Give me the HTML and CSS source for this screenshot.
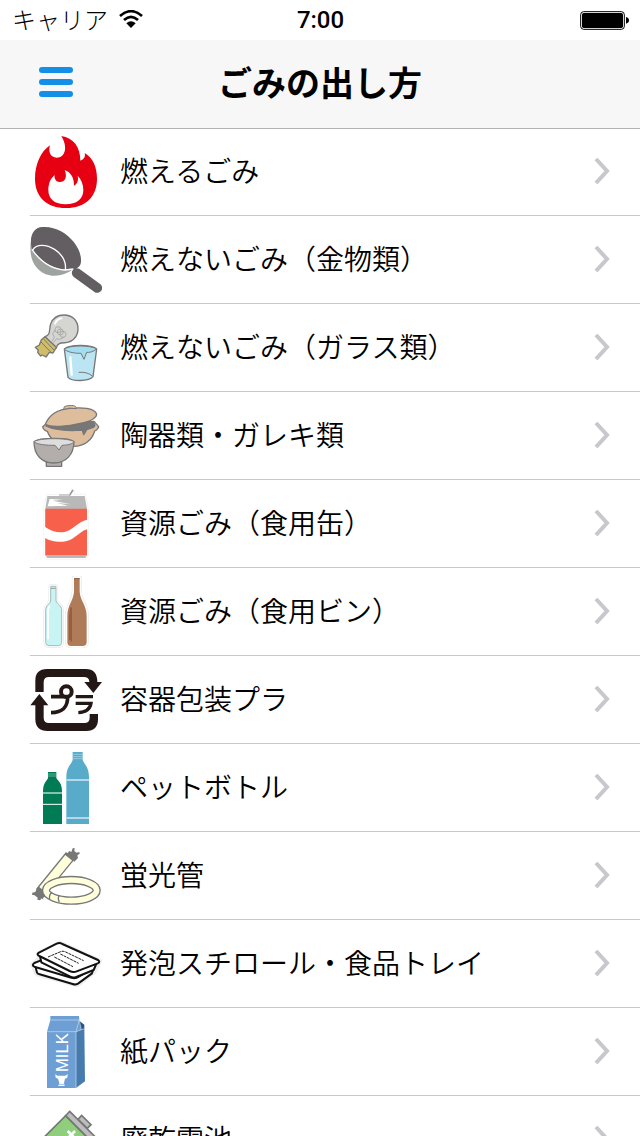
FILE: index.html
```html
<!DOCTYPE html>
<html lang="ja">
<head>
  <meta charset="UTF-8">
  <meta name="viewport" content="width=device-width, initial-scale=1">
  <title>ごみの出し方</title>
  <link rel="stylesheet" href="styles.css">
</head>
<body>
  <div class="status-bar">
    <div class="carrier">
      <span>キャリア</span>
      <svg class="wifi" viewBox="0 0 72 54" aria-hidden="true">
        <path d="M3 18Q36-11 69 18M15 30Q36 11 57 30" fill="none" stroke="#000" stroke-width="8"/>
        <path d="M22 40Q36 28 50 40L36 54Z"/>
      </svg>
    </div>
    <div class="clock">7:00</div>
    <svg class="battery" viewBox="0 0 147 57" aria-hidden="true">
      <rect x="2" y="2" width="131" height="53" rx="9" fill="none" stroke="#000" stroke-width="3"/>
      <rect x="6" y="6" width="123" height="45" rx="5"/>
      <path d="M138 18Q147 20 147 28T138 38Z"/>
    </svg>
  </div>

  <header class="nav-bar">
    <button class="menu-button" type="button" aria-label="メニュー">
      <span></span><span></span><span></span>
    </button>
    <h1>ごみの出し方</h1>
  </header>

  <ul class="list">
    <li>
      <a href="#" class="row">
        <svg class="icon" viewBox="30 18 216 216" aria-hidden="true">
          <path fill="#e60012" d="M124 18C160 24 181 50 181 92C192 88 197 80 194 69C218 83 231 110 231 146C231 200 196 234 138 234C80 234 45 200 45 146C45 103 62 65 90 46C84 66 92 83 110 83C135 83 145 53 124 18Z"/>
          <path fill="#fff" d="M134 120C151 126 163 142 162 167C172 161 176 151 173 137C184 148 190 163 190 180C190 207 170 223 137 223C104 223 85 207 85 180C85 162 91 146 104 135C102 146 108 156 119 156C135 156 143 142 134 120Z"/>
        </svg>
        <span class="label">燃えるごみ</span>
        <svg class="chevron" viewBox="0 0 16 26" aria-hidden="true"><path d="M2 1L13 13L2 25"/></svg>
      </a>
    </li>
    <li>
      <a href="#" class="row">
        <svg class="icon" viewBox="30 18 216 216" aria-hidden="true">
          <path fill="#9fa3a0" d="M32 72C28 116 38 145 68 164C98 180 130 175 160 154L100 90Z"/>
          <path fill="#625e61" d="M36 93C28 66 34 34 60 28C97 21 139 42 162 73C182 99 189 130 178 145C171 154 155 158 136 155C100 153 58 128 36 93Z"/>
          <path fill="none" stroke="#fff" stroke-width="4" d="M36 94C62 132 98 154 136 156L160 153M38 96C49 77 79 78 105 95C128 111 139 133 136 156"/>
          <path stroke="#625e61" stroke-width="29" stroke-linecap="round" d="M170 165L232 210"/>
        </svg>
        <span class="label">燃えないごみ（金物類）</span>
        <svg class="chevron" viewBox="0 0 16 26" aria-hidden="true"><path d="M2 1L13 13L2 25"/></svg>
      </a>
    </li>
    <li>
      <a href="#" class="row">
        <svg class="icon" viewBox="30 18 216 216" aria-hidden="true">
          <g stroke="#777" stroke-width="4" stroke-linejoin="round">
            <path fill="#d5d5d2" d="M75 92C94 86 86 70 92 54C99 35 113 27 132 27C157 27 174 44 174 68C174 91 158 108 138 110C126 111 112 109 109 126Z"/>
            <path fill="#d0bd68" d="M75 92L109 124L99 141L88 139L78 153L67 147L62 150L53 139L55 133L46 124L58 117L64 101Z"/>
            <path fill="none" stroke-width="3" d="M70 98L102 132M62 107L94 140"/>
            <g fill="none" stroke="#999" stroke-width="2">
              <circle cx="114" cy="71" r="9"/><circle cx="121" cy="78" r="9"/><circle cx="129" cy="85" r="9"/>
              <path d="M105 72L98 83L103 94L96 106M131 94L120 100L110 98L100 110"/>
            </g>
            <path fill="#bce5f4" d="M133 129L144 214C155 227 207 227 219 212L230 129C213 115 149 115 133 129Z"/>
            <path fill="#a5ddf0" stroke-width="3" d="M133 129C149 117 213 117 230 129C219 138 207 140 200 139L192 160L183 142C161 142 141 138 133 129Z"/>
            <path fill="none" stroke-width="3" d="M176 199Q202 197 217 210"/>
          </g>
          <path stroke="#fff" stroke-width="7" stroke-linecap="round" d="M151 154L155 206"/>
          <path fill="none" stroke="#fff" stroke-width="6" stroke-linecap="round" d="M105 53Q111 39 124 37"/>
        </svg>
        <span class="label">燃えないごみ（ガラス類）</span>
        <svg class="chevron" viewBox="0 0 16 26" aria-hidden="true"><path d="M2 1L13 13L2 25"/></svg>
      </a>
    </li>
    <li>
      <a href="#" class="row">
        <svg class="icon" viewBox="30 18 216 216" aria-hidden="true">
          <g stroke="#777" stroke-width="4" stroke-linejoin="round">
            <path fill="#debd9d" d="M78 90L68 98Q70 109 82 112C91 139 119 157 161 157C194 157 216 138 224 111Q234 107 236 98L222 82Z"/>
            <path fill="#777" d="M78 96C100 86 192 77 220 86Q229 94 220 100L200 107L191 122L187 108C143 112 99 107 78 96Z"/>
            <path fill="#debd9d" d="M76 91C86 66 110 46 151 43C186 39 221 43 229 58C234 71 211 82 181 88C144 97 93 102 76 91Z"/>
            <path fill="#debd9d" stroke-width="3" d="M131 46L133 38C147 32 166 34 168 39L169 44Q148 40 131 46Z"/>
            <path fill="#b3aeac" d="M79 203H125V217H79Z"/>
            <path fill="#b3aeac" d="M42 143C42 180 63 207 101 207C139 207 161 181 162 143C149 130 58 130 42 143Z"/>
            <path fill="#ddd" stroke-width="3" d="M42 143C57 131 147 131 162 143C158 150 145 153 126 154L117 168L105 154C80 154 51 152 42 143Z"/>
          </g>
        </svg>
        <span class="label">陶器類・ガレキ類</span>
        <svg class="chevron" viewBox="0 0 16 26" aria-hidden="true"><path d="M2 1L13 13L2 25"/></svg>
      </a>
    </li>
    <li>
      <a href="#" class="row">
        <svg class="icon" viewBox="30 24 216 216" aria-hidden="true">
          <path fill="#fff" stroke="#eee" stroke-width="2" d="M80 43H145L155 26L165 31L160 43H196L205 85V227L196 238H80L71 227V85Z"/>
          <path fill="#b9b9b9" d="M82 48H194L201 86V226L196 234H82L76 226V86Z"/>
          <path stroke="#999" stroke-width="5" d="M148 47L159 30"/>
          <path stroke="#bbb" stroke-width="4" d="M117 45H150"/>
          <path fill="#f7614c" d="M76 86H201V225H76Z"/>
          <path fill="#fff" d="M75 141C101 158 128 162 150 149C169 137 181 124 201 119V148C183 154 174 166 157 176C130 190 99 188 75 174Z"/>
          <path fill="#fff" d="M89 57L127 59L98 62L153 73L110 69L145 77L83 79Z"/>
        </svg>
        <span class="label">資源ごみ（食用缶）</span>
        <svg class="chevron" viewBox="0 0 16 26" aria-hidden="true"><path d="M2 1L13 13L2 25"/></svg>
      </a>
    </li>
    <li>
      <a href="#" class="row">
        <svg class="icon" viewBox="30 18 216 216" aria-hidden="true">
          <g stroke-linejoin="round">
            <path fill="#fff" stroke="#e4e4e4" stroke-width="13" d="M92 49H108V93C111 103 125 105 125 120V217Q125 227 115 227H87Q77 227 77 217V120C77 105 89 103 92 93Z"/>
            <path fill="#fff" stroke="#e4e4e4" stroke-width="13" d="M162 24H179V66C181 92 200 107 200 137V216Q200 228 188 228H153Q142 228 142 216V137C142 107 160 92 162 66Z"/>
            <path fill="#c8f5f3" stroke="#fff" stroke-width="10" paint-order="stroke" d="M92 49H108V93C111 103 125 105 125 120V217Q125 227 115 227H87Q77 227 77 217V120C77 105 89 103 92 93Z"/>
            <path fill="#b07b58" stroke="#fff" stroke-width="10" paint-order="stroke" d="M162 24H179V66C181 92 200 107 200 137V216Q200 228 188 228H153Q142 228 142 216V137C142 107 160 92 162 66Z"/>
            <path fill="none" stroke="#a9b9b9" stroke-width="3" d="M92 49H108V93C111 103 125 105 125 120V217Q125 227 115 227H87Q77 227 77 217V120C77 105 89 103 92 93Z"/>
          </g>
          <path stroke="#8e9c9c" stroke-width="3" d="M93 55H107"/>
          <path stroke="#945f40" stroke-width="3" d="M162 26H179"/>
          <path fill="#94603f" d="M151 112H156V217L147 208V137Z"/>
          <path fill="none" stroke="#fff" stroke-width="6" d="M84 208V122Q85 112 90 108"/>
        </svg>
        <span class="label">資源ごみ（食用ビン）</span>
        <svg class="chevron" viewBox="0 0 16 26" aria-hidden="true"><path d="M2 1L13 13L2 25"/></svg>
      </a>
    </li>
    <li>
      <a href="#" class="row">
        <svg class="icon" viewBox="30 18 216 216" aria-hidden="true">
          <g fill="#231815">
            <path d="M46 102V68Q46 33 81 33H197Q232 33 232 72H246L220 105L193 72H208Q208 57 191 57H87Q71 57 71 73V102Z"/>
            <path d="M234 168V184Q234 219 199 219H83Q46 219 46 183V142H31L58 108L85 142H71V179Q71 195 87 195H193Q209 195 209 179V168Z"/>
          </g>
          <g fill="none" stroke="#231815">
            <circle cx="139" cy="101" r="16" stroke-width="12"/>
            <path stroke-width="11" d="M93 116H143C143 148 129 163 93 164"/>
            <path stroke-width="10" d="M167 116H219M167 136H213Q209 162 175 164"/>
          </g>
        </svg>
        <span class="label">容器包装プラ</span>
        <svg class="chevron" viewBox="0 0 16 26" aria-hidden="true"><path d="M2 1L13 13L2 25"/></svg>
      </a>
    </li>
    <li>
      <a href="#" class="row">
        <svg class="icon" viewBox="30 18 216 216" aria-hidden="true">
          <path fill="#007b55" d="M84 78H109V96C115 106 126 110 126 137V234H69V137C69 110 80 106 84 96Z"/>
          <path fill="#58acca" d="M158 18H188V42C192 55 207 61 207 94V234H139V94C139 61 155 55 158 42Z"/>
          <path stroke="#98cbb9" stroke-width="2" d="M83 84H110M83 90H110"/>
          <path stroke="#b2dae7" stroke-width="2" d="M157 25H189M157 32H189M157 38H189"/>
          <path stroke="#86c1ac" stroke-width="6" d="M69 141H126"/>
          <path stroke="#fff" stroke-width="3" d="M69 175H126"/>
          <path stroke="#b5d9e7" stroke-width="6" d="M139 102H207M139 216H207"/>
        </svg>
        <span class="label">ペットボトル</span>
        <svg class="chevron" viewBox="0 0 16 26" aria-hidden="true"><path d="M2 1L13 13L2 25"/></svg>
      </a>
    </li>
    <li>
      <a href="#" class="row">
        <svg class="icon" viewBox="30 282 216 216" aria-hidden="true">
          <path stroke="#777" stroke-width="34" d="M62 438L151 329"/>
          <path stroke="#ffffdc" stroke-width="26" d="M68 431L146 335"/>
          <path fill="#777" d="M138 326L148 315L154 318L158 307L164 306L163 315L170 320L178 318L179 323L172 328L174 336L163 347ZM51 425L77 450L69 456L70 461L65 457L60 463L52 461L53 455L44 448L36 446L37 440L46 438Z"/>
          <ellipse cx="154" cy="433" rx="76" ry="31" fill="none" stroke="#777" stroke-width="25"/>
          <ellipse cx="154" cy="433" rx="76" ry="31" fill="none" stroke="#ffffdc" stroke-width="17"/>
          <path fill="none" stroke="#777" stroke-width="4" d="M96 439Q86 446 89 460M118 447Q112 458 118 468"/>
        </svg>
        <span class="label">蛍光管</span>
        <svg class="chevron" viewBox="0 0 16 26" aria-hidden="true"><path d="M2 1L13 13L2 25"/></svg>
      </a>
    </li>
    <li>
      <a href="#" class="row">
        <svg class="icon" viewBox="30 24 216 216" aria-hidden="true">
          <path fill="#fff" stroke="#eee" stroke-width="14" stroke-linejoin="round" d="M37 133L60 114L54 101L119 69L239 123L221 157L172 195L49 161Z"/>
          <g fill="#fff" stroke="#111" stroke-width="6" stroke-linejoin="round">
            <path d="M47 142L51 158Q53 162 59 163L158 192Q166 196 174 191L216 160L221 143L130 116Z"/>
            <path d="M43 129Q34 136 43 140L154 173Q166 177 175 171L220 143L61 122Z"/>
            <path d="M60 108L64 127L151 170Q159 175 169 171L221 150L228 134Z"/>
            <path d="M57 98Q48 104 58 108L149 153Q160 158 170 154L233 130Q242 126 234 120L127 72Q119 67 110 71Z"/>
          </g>
          <g fill="none" stroke="#222" stroke-width="3" stroke-dasharray="9 2">
            <path d="M84 111L122 95Q130 92 137 96L191 122M121 102L176 130M103 111L159 140"/>
          </g>
        </svg>
        <span class="label">発泡スチロール・食品トレイ</span>
        <svg class="chevron" viewBox="0 0 16 26" aria-hidden="true"><path d="M2 1L13 13L2 25"/></svg>
      </a>
    </li>
    <li>
      <a href="#" class="row">
        <svg class="icon" viewBox="30 24 216 216" aria-hidden="true">
          <path fill="#6e9fd4" d="M91 24H177L178 36L168 71V240H81V71L91 36Z"/>
          <path fill="#487bad" d="M168 71L193 62L195 220L168 240Z"/>
          <path fill="#285787" d="M178 38L193 50V63L168 71Z"/>
          <path fill="#6e9fd4" d="M178 42L168 71L184 65Z"/>
          <path fill="none" stroke="#c8ddf2" stroke-width="2" d="M91 36H178L168 71H81M168 71L193 62M168 71V240M178 38L184 65"/>
          <text class="milk" transform="translate(143 192) rotate(-90)">MILK</text>
          <path fill="#fff" d="M106 198L112 203H136L143 198L142 209L135 212L132 225L134 234H115L118 225L114 212L107 209Z"/>
          <path stroke="#6e9fd4" stroke-width="2" d="M117 229H133"/>
        </svg>
        <span class="label">紙パック</span>
        <svg class="chevron" viewBox="0 0 16 26" aria-hidden="true"><path d="M2 1L13 13L2 25"/></svg>
      </a>
    </li>
    <li>
      <a href="#" class="row">
        <svg class="icon" viewBox="30 288 216 216" aria-hidden="true">
          <g stroke="#777" stroke-width="5">
            <path fill="#bdbdbd" d="M174 334L185 322L213 350L202 361Z"/>
            <path fill="#8fce7c" d="M137 323L215 401L124 492L46 414Z"/>
            <path fill="#bdbdbd" d="M149 310L228 389L215 401L137 323Z"/>
          </g>
          <path stroke="#fff" stroke-width="8" d="M143 369L165 391M165 369L143 391"/>
        </svg>
        <span class="label">廃乾電池</span>
        <svg class="chevron" viewBox="0 0 16 26" aria-hidden="true"><path d="M2 1L13 13L2 25"/></svg>
      </a>
    </li>
  </ul>
</body>
</html>
```

FILE: styles.css
```css
* {
  box-sizing: border-box;
}

body {
  margin: 0;
  height: 100vh;
  display: flex;
  flex-direction: column;
  overflow: hidden;
  background: #fff;
  color: #000;
  font-family: "Noto Sans CJK JP", sans-serif;
}

/* status bar */
.status-bar {
  display: grid;
  grid-template-columns: 1fr auto 1fr;
  align-items: center;
  flex: none;
  height: 40px;
  padding: 0 11px 0 12px;
}

.carrier {
  display: flex;
  align-items: center;
  gap: 11px;
  padding-bottom: 2px;
  font-size: 24px;
  font-weight: 300;
  line-height: 38px;
}

.wifi {
  width: 24px;
  height: 18px;
}

.clock {
  font-family: Roboto, sans-serif;
  font-size: 24px;
  font-weight: 500;
  line-height: 40px;
}

.battery {
  justify-self: end;
  width: 49px;
  height: 19px;
}

/* navigation bar */
.nav-bar {
  display: grid;
  grid-template-columns: 1fr auto 1fr;
  align-items: center;
  flex: none;
  height: 89px;
  padding: 0 30px 4px;
  background: #f7f7f7;
  border-bottom: 1px solid #b2b2b2;
}

.nav-bar h1 {
  margin: 0;
  font-size: 34px;
  font-weight: 700;
  line-height: 48px;
}

.menu-button {
  display: flex;
  flex-direction: column;
  justify-self: start;
  gap: 6px;
  padding: 9px;
  border: none;
  background: none;
  cursor: pointer;
}

.menu-button span {
  width: 34px;
  height: 6px;
  border-radius: 3px;
  background: #148fe7;
}

/* category list */
.list {
  flex: 1;
  min-height: 0;
  margin: 0;
  padding: 0 0 0 30px;
  list-style: none;
  overflow-y: auto;
  scrollbar-width: none;
}

.list li {
  height: 88px;
  border-bottom: 1px solid #c8c7cc;
}

.list li:first-child {
  height: 87px;
}

.row {
  display: flex;
  align-items: center;
  height: 100%;
  padding-right: 30px;
  color: #000;
  text-decoration: none;
}

.icon {
  flex: none;
  width: 72px;
  height: 72px;
  margin-right: 18px;
}

.label {
  flex: 1;
  padding-bottom: 4px;
  font-size: 28px;
  font-weight: 350;
  line-height: 40px;
}

.chevron {
  width: 16px;
  height: 26px;
  margin-bottom: 2px;
  fill: none;
  stroke: #c7c7cc;
  stroke-width: 4;
}

.milk {
  fill: #fff;
  font-family: "Liberation Sans", sans-serif;
  font-size: 50px;
}
```
